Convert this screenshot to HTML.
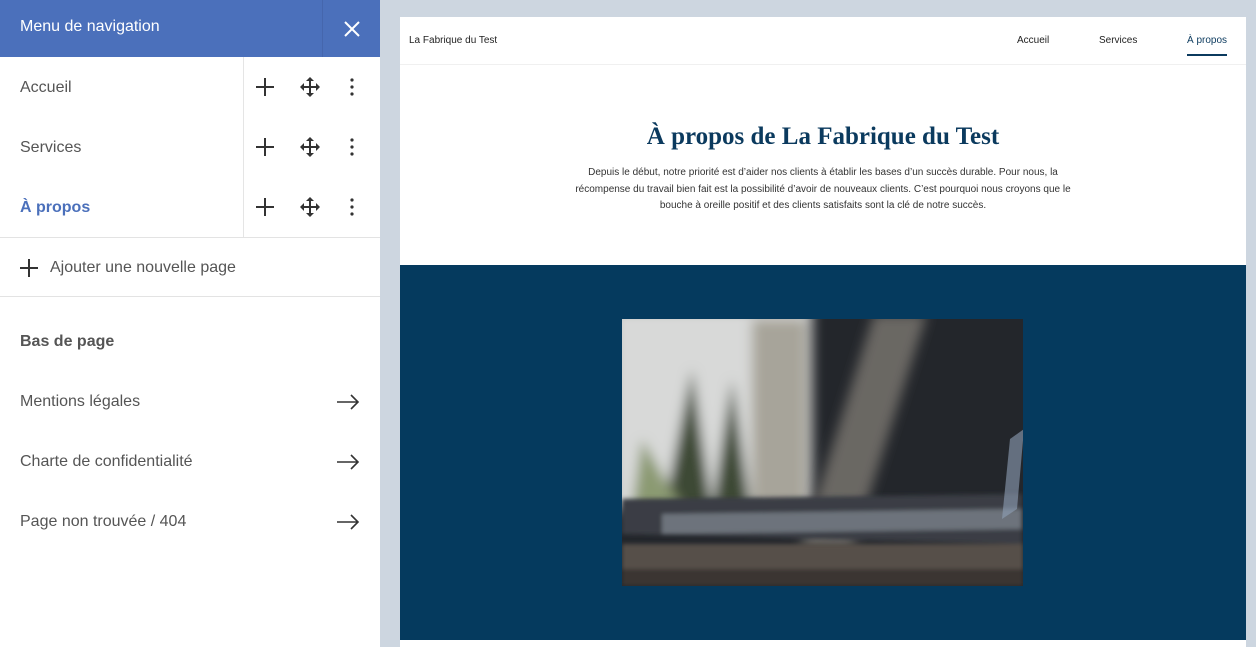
<!DOCTYPE html>
<html><head><meta charset="utf-8"><style>
*{margin:0;padding:0;box-sizing:border-box}
body{width:1256px;height:647px;overflow:hidden;background:#cdd6e0;font-family:"Liberation Sans",sans-serif;position:relative}
.side{position:absolute;left:0;top:0;width:380px;height:647px;background:#fff;color:#555}
.hdr{height:57px;background:#4b70bb;color:#fff;font-size:16px;display:flex;align-items:center;padding-left:20px;position:relative;padding-bottom:3px}
.hdr .x{position:absolute;right:0;top:0;width:58px;height:57px;border-left:1px solid #4566ad;display:flex;align-items:center;justify-content:center}
.row{height:60px;position:relative;font-size:16px;display:flex;align-items:center;padding-left:20px;padding-top:2px}
.row .acts{position:absolute;left:243px;top:0;height:100%;border-left:1px solid #e5e5e5;width:137px}
.acts svg{position:absolute;top:50%;transform:translateY(-50%)}
.sep{border-top:1px solid #e3e3e3}
.link{height:60px;display:flex;align-items:center;padding-left:20px;font-size:16px;position:relative;padding-top:2px}
.link svg{position:absolute;right:20px}
.page{position:absolute;left:400px;top:17px;width:846px;height:630px;background:#fff}
.nav{height:48px;border-bottom:1px solid #f0f0f0;font-family:"Liberation Sans Narrow","Liberation Sans",sans-serif;font-size:10px;color:#222;position:relative}
.nav span{position:absolute;top:18px}
h1{font-family:"Liberation Serif",serif;font-weight:bold;color:#0b3a5e;font-size:25px;text-align:center;position:absolute;top:106px;width:100%}
.p{position:absolute;top:148px;left:165px;width:516px;text-align:center;font-family:"Liberation Sans Narrow","Liberation Sans",sans-serif;font-size:10px;line-height:16.5px;color:#333}
.dark{position:absolute;left:0;top:248px;width:846px;height:375px;background:#053a5e}
.img{position:absolute;left:222px;top:54px;width:401px;height:267px;overflow:hidden;background:#24262a}
</style></head><body>
<div class="side">
 <div class="hdr">Menu de navigation<div class="x"><svg width="16" height="16"><path d="M1 1L15 15M15 1L1 15" stroke="#fff" stroke-width="2"/></svg></div></div>
 <div class="row">Accueil<div class="acts">
  <svg style="left:12px" width="18" height="18"><path d="M9 0V18M0 9H18" stroke="#333" stroke-width="2"/></svg>
  <svg style="left:56px" width="20" height="20"><path d="M10 1V19M1 10H19" stroke="#333" stroke-width="2"/><path d="M10 0L6 4H14ZM10 20L6 16H14ZM0 10L4 6V14ZM20 10L16 6V14Z" fill="#333"/></svg>
  <svg style="left:106px" width="4" height="18"><circle cx="2" cy="2" r="1.6" fill="#333"/><circle cx="2" cy="9" r="1.6" fill="#333"/><circle cx="2" cy="16" r="1.6" fill="#333"/></svg></div></div>
 <div class="row">Services<div class="acts">
  <svg style="left:12px" width="18" height="18"><path d="M9 0V18M0 9H18" stroke="#333" stroke-width="2"/></svg>
  <svg style="left:56px" width="20" height="20"><path d="M10 1V19M1 10H19" stroke="#333" stroke-width="2"/><path d="M10 0L6 4H14ZM10 20L6 16H14ZM0 10L4 6V14ZM20 10L16 6V14Z" fill="#333"/></svg>
  <svg style="left:106px" width="4" height="18"><circle cx="2" cy="2" r="1.6" fill="#333"/><circle cx="2" cy="9" r="1.6" fill="#333"/><circle cx="2" cy="16" r="1.6" fill="#333"/></svg></div></div>
 <div class="row" style="color:#4b70bb;font-weight:bold;height:60px;padding-top:2px">À propos<div class="acts">
  <svg style="left:12px" width="18" height="18"><path d="M9 0V18M0 9H18" stroke="#333" stroke-width="2"/></svg>
  <svg style="left:56px" width="20" height="20"><path d="M10 1V19M1 10H19" stroke="#333" stroke-width="2"/><path d="M10 0L6 4H14ZM10 20L6 16H14ZM0 10L4 6V14ZM20 10L16 6V14Z" fill="#333"/></svg>
  <svg style="left:106px" width="4" height="18"><circle cx="2" cy="2" r="1.6" fill="#333"/><circle cx="2" cy="9" r="1.6" fill="#333"/><circle cx="2" cy="16" r="1.6" fill="#333"/></svg></div></div>
 <div class="sep"></div>
 <div class="link" style="height:58px"><svg style="position:static;margin-right:12px" width="18" height="18"><path d="M9 0V18M0 9H18" stroke="#333" stroke-width="2"/></svg>Ajouter une nouvelle page</div>
 <div class="sep"></div>
 <div class="link" style="font-weight:bold;height:88px;padding-top:2px">Bas de page</div>
 <div class="link" style="margin-top:-14px">Mentions légales<svg width="24" height="16"><path d="M1 8H22M15 1L22 8L15 15" stroke="#333" stroke-width="1.6" fill="none"/></svg></div>
 <div class="link">Charte de confidentialité<svg width="24" height="16"><path d="M1 8H22M15 1L22 8L15 15" stroke="#333" stroke-width="1.6" fill="none"/></svg></div>
 <div class="link">Page non trouvée / 404<svg width="24" height="16"><path d="M1 8H22M15 1L22 8L15 15" stroke="#333" stroke-width="1.6" fill="none"/></svg></div>
</div>
<div class="page">
 <div class="nav"><span style="left:9px">La Fabrique du Test</span><span style="left:617px">Accueil</span><span style="left:699px">Services</span><span style="left:787px;color:#0b3a5e">À propos</span><div style="position:absolute;left:787px;top:37px;width:40px;height:2px;background:#0b3a5e"></div></div>
 <h1>À propos de La Fabrique du Test</h1>
 <div class="p">Depuis le début, notre priorité est d’aider nos clients à établir les bases d’un succès durable. Pour nous, la récompense du travail bien fait est la possibilité d’avoir de nouveaux clients. C’est pourquoi nous croyons que le bouche à oreille positif et des clients satisfaits sont la clé de notre succès.</div>
 <div class="dark"><div class="img">
  <svg width="401" height="267">
   <defs><filter id="b"><feGaussianBlur stdDeviation="6"/></filter><filter id="b2"><feGaussianBlur stdDeviation="2"/></filter></defs>
   <rect width="401" height="267" fill="#23262b"/>
   <g filter="url(#b)"><rect x="-10" y="-10" width="200" height="200" fill="#d8d9d8"/><rect x="130" y="0" width="55" height="200" fill="#a7a49a"/>
   <path d="M40 200L70 50L90 190ZM90 190L110 60L130 200Z" fill="#3e4a36"/><path d="M20 120L60 190L10 190Z" fill="#8b9a72"/></g>
   <path d="M252 -5L305 -5L230 230L178 230Z" fill="#6b6864" filter="url(#b)"/>
   <g filter="url(#b2)"><path d="M0 180L400 175L400 225L0 215Z" fill="#3a3e45"/><path d="M40 195L400 190L400 210L40 215Z" fill="#6d737c"/>
   <rect x="0" y="225" width="401" height="42" fill="#575049"/><rect x="0" y="250" width="401" height="17" fill="#3a3430"/></g>
   <path d="M388 120L402 110L395 190L380 200Z" fill="#8fa0b8" opacity=".6"/>
  </svg></div></div>
</div>
</body></html>
